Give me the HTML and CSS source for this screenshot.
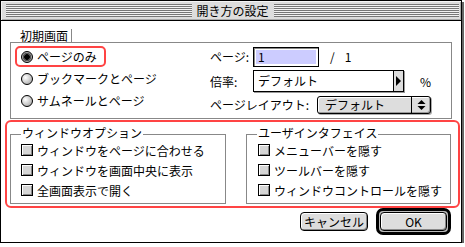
FILE: index.html
```html
<!DOCTYPE html>
<html lang="ja">
<head>
    <meta charset="UTF-8">
    <meta name="viewport" content="width=device-width, initial-scale=1.0">
    <title>開き方の設定</title>
    <link rel="stylesheet" href="styles.css">
</head>
<body>
    <div class="window">
        <div class="titlebar">
            <span class="stripes"></span>
            <span class="title">開き方の設定</span>
            <span class="stripes"></span>
        </div>

        <div class="content">
            <!-- 初期画面 -->
            <div class="group group-initial">
                <div class="group-title tab">初期画面</div>
                <div class="initial-body">
                    <div class="radios">
                        <div class="radio-row marked"><span class="radio on"></span>ページのみ</div>
                        <div class="radio-row"><span class="radio"></span>ブックマークとページ</div>
                        <div class="radio-row"><span class="radio"></span>サムネールとページ</div>
                    </div>
                    <div class="fields">
                        <div class="field-row row-page">
                            <span class="lbl">ページ:</span>
                            <span class="textbox"><span class="sel">1</span></span>
                            <span class="slash">/</span>
                            <span class="total">1</span>
                        </div>
                        <div class="field-row row-zoom">
                            <span class="lbl">倍率:</span>
                            <span class="combo">
                                <span class="combo-text">デフォルト</span>
                                <span class="combo-arrow"><span class="tri-right"></span></span>
                            </span>
                            <span class="percent">%</span>
                        </div>
                        <div class="field-row row-layout">
                            <span class="lbl lbl-wide">ページレイアウト:</span>
                            <span class="popup">
                                <span class="popup-text">デフォルト</span>
                                <span class="popup-arrows">
                                    <svg width="9" height="12" viewBox="0 0 9 12">
                                        <polygon points="0.5,5 4.5,1 8.5,5" fill="#000"/>
                                        <polygon points="0.5,7 4.5,11 8.5,7" fill="#000"/>
                                    </svg>
                                </span>
                            </span>
                        </div>
                    </div>
                </div>
            </div>

            <!-- options, marked in red -->
            <div class="marked-box">
                <div class="group group-window">
                    <div class="group-title">ウィンドウオプション</div>
                    <div class="check-row"><span class="check"></span>ウィンドウをページに合わせる</div>
                    <div class="check-row"><span class="check"></span>ウィンドウを画面中央に表示</div>
                    <div class="check-row"><span class="check"></span>全画面表示で開く</div>
                </div>
                <div class="group group-ui">
                    <div class="group-title">ユーザインタフェイス</div>
                    <div class="check-row"><span class="check"></span>メニューバーを隠す</div>
                    <div class="check-row"><span class="check"></span>ツールバーを隠す</div>
                    <div class="check-row"><span class="check"></span>ウィンドウコントロールを隠す</div>
                </div>
            </div>

            <div class="buttons">
                <button class="btn btn-cancel">キャンセル</button>
                <div class="default-ring"><button class="btn btn-ok">OK</button></div>
            </div>
        </div>
    </div>
</body>
</html>
```

FILE: styles.css
```css
body {
    margin: 0;
    background: #fff;
    font-family: "Noto Sans CJK JP", "Noto Sans", sans-serif;
    font-size: 12px;
    color: #000;
}

.window {
    width: 460px;
    height: 241px;
    border: 1px solid #000;
    box-shadow: 2px 2px 0 #666;
    background: #fff;
}

/* title bar */
.titlebar {
    display: flex;
    align-items: center;
    height: 19px;
    padding: 0 2px 0 5px;
    background: #ddd;
    border-bottom: 1px solid #000;
    box-shadow: inset 1px 1px 0 #f4f4f4, inset -1px -1px 0 #aaa;
}

.stripes {
    flex: 1;
    height: 13px;
    background: repeating-linear-gradient(to bottom, #777 0 1px, #f2f2f2 1px 2px);
}

.title {
    padding: 0 5px;
    line-height: 19px;
}

/* group boxes */
.group {
    box-sizing: border-box;
    border: 1px solid #888;
}

.group-title {
    width: max-content;
    line-height: 14px;
    margin: -9px 0 0 10px;
    padding: 0 1px;
    background: #fff;
}

.group-title.tab {
    margin: -14px 0 0 9px;
    padding: 0 3px 0 0;
    background: none;
    border-right: 1px solid #888;
}

.group-initial {
    width: 442px;
    height: 77px;
    margin: 21px 0 0 9px;
}

.initial-body {
    display: flex;
    padding-left: 4px;
}

.radios {
    width: 195px;
    padding-top: 3px;
}

.radio-row {
    box-sizing: border-box;
    display: flex;
    align-items: center;
    gap: 4px;
    width: max-content;
    height: 21px;
    padding: 0 7px 0 4px;
    border: 2px solid transparent;
    border-radius: 5px;
}

.radio-row + .radio-row {
    margin-top: 1px;
}

.radio-row.marked {
    border-color: #f44;
}

.radio {
    box-sizing: border-box;
    width: 12px;
    height: 12px;
    border: 1px solid #000;
    border-radius: 50%;
    background: radial-gradient(circle at 35% 35%, #fff 0, #ddd 35%, #999 100%);
}

.radio.on {
    background: radial-gradient(circle, #000 0 2.5px, #555 3px 4px, #aaa 4.5px);
}

.fields {
    padding-top: 2px;
}

.field-row {
    display: flex;
    align-items: center;
}

.row-page { height: 23px; }
.row-zoom { height: 26px; }
.row-layout { height: 21px; }

.lbl { width: 43px; }
.lbl-wide { width: 107px; }

.textbox {
    box-sizing: border-box;
    display: flex;
    align-items: center;
    width: 66px;
    height: 20px;
    padding: 2px;
    border: 1px solid #000;
    box-shadow: inset 1px 1px 0 #888;
}

.sel {
    flex: 1;
    height: 14px;
    line-height: 14px;
    padding-left: 2px;
    background: #ccf;
}

.slash { margin-left: 11px; }
.total { margin-left: 10px; }

.combo {
    box-sizing: border-box;
    display: flex;
    width: 151px;
    height: 22px;
    border: 1px solid #000;
    box-shadow: 1px 1px 0 #999;
}

.combo-text {
    flex: 1;
    padding-left: 4px;
    line-height: 20px;
}

.combo-arrow {
    display: flex;
    align-items: center;
    justify-content: center;
    width: 9px;
    border-left: 1px solid #000;
    background: #ddd;
}

.tri-right {
    width: 0;
    height: 0;
    border-left: 5px solid #000;
    border-top: 5px solid transparent;
    border-bottom: 5px solid transparent;
}

.percent { margin-left: 16px; }

.popup {
    box-sizing: border-box;
    display: flex;
    width: 114px;
    height: 18px;
    border: 1px solid #000;
    border-radius: 3px;
    background: #ddd;
    box-shadow: inset 1px 1px 0 #fff, inset -1px -1px 0 #999, 1px 1px 0 #aaa;
}

.popup-text {
    flex: 1;
    padding-left: 7px;
    line-height: 16px;
}

.popup-arrows {
    display: flex;
    align-items: center;
    justify-content: center;
    width: 18px;
    border-left: 1px solid #000;
}

/* red marked area */
.marked-box {
    box-sizing: border-box;
    display: flex;
    gap: 20px;
    width: 455px;
    height: 88px;
    margin: 1px 0 0 4px;
    padding: 12px 0 0 3px;
    border: 2px solid #f44;
    border-radius: 6px;
}

.group-window { width: 216px; height: 70px; }
.group-ui { width: 205px; height: 70px; }

.check-row {
    display: flex;
    align-items: center;
    gap: 4px;
    height: 20px;
    padding-left: 10px;
}

.group-ui .check-row { padding-left: 11px; }

.check {
    box-sizing: border-box;
    width: 12px;
    height: 12px;
    border: 1px solid #000;
    background: #d6d6d6;
    box-shadow: inset 1px 1px 0 #fff, inset -1px -1px 0 #888;
}

/* buttons */
.buttons {
    display: flex;
    justify-content: flex-end;
    align-items: center;
    gap: 8px;
    height: 27px;
    padding-right: 10px;
}

.btn {
    box-sizing: border-box;
    height: 19px;
    padding: 0;
    border: 1px solid #000;
    border-radius: 4px;
    background: #ddd;
    box-shadow: inset 1px 1px 0 #fff, inset -1px -1px 0 #888;
    font: inherit;
    line-height: 17px;
    color: #000;
}

.btn-cancel { width: 68px; }
.btn-ok { width: 67px; display: block; }

.default-ring {
    padding: 1px;
    border: 3px solid #000;
    border-radius: 7px;
    background: #bbb;
}
```
